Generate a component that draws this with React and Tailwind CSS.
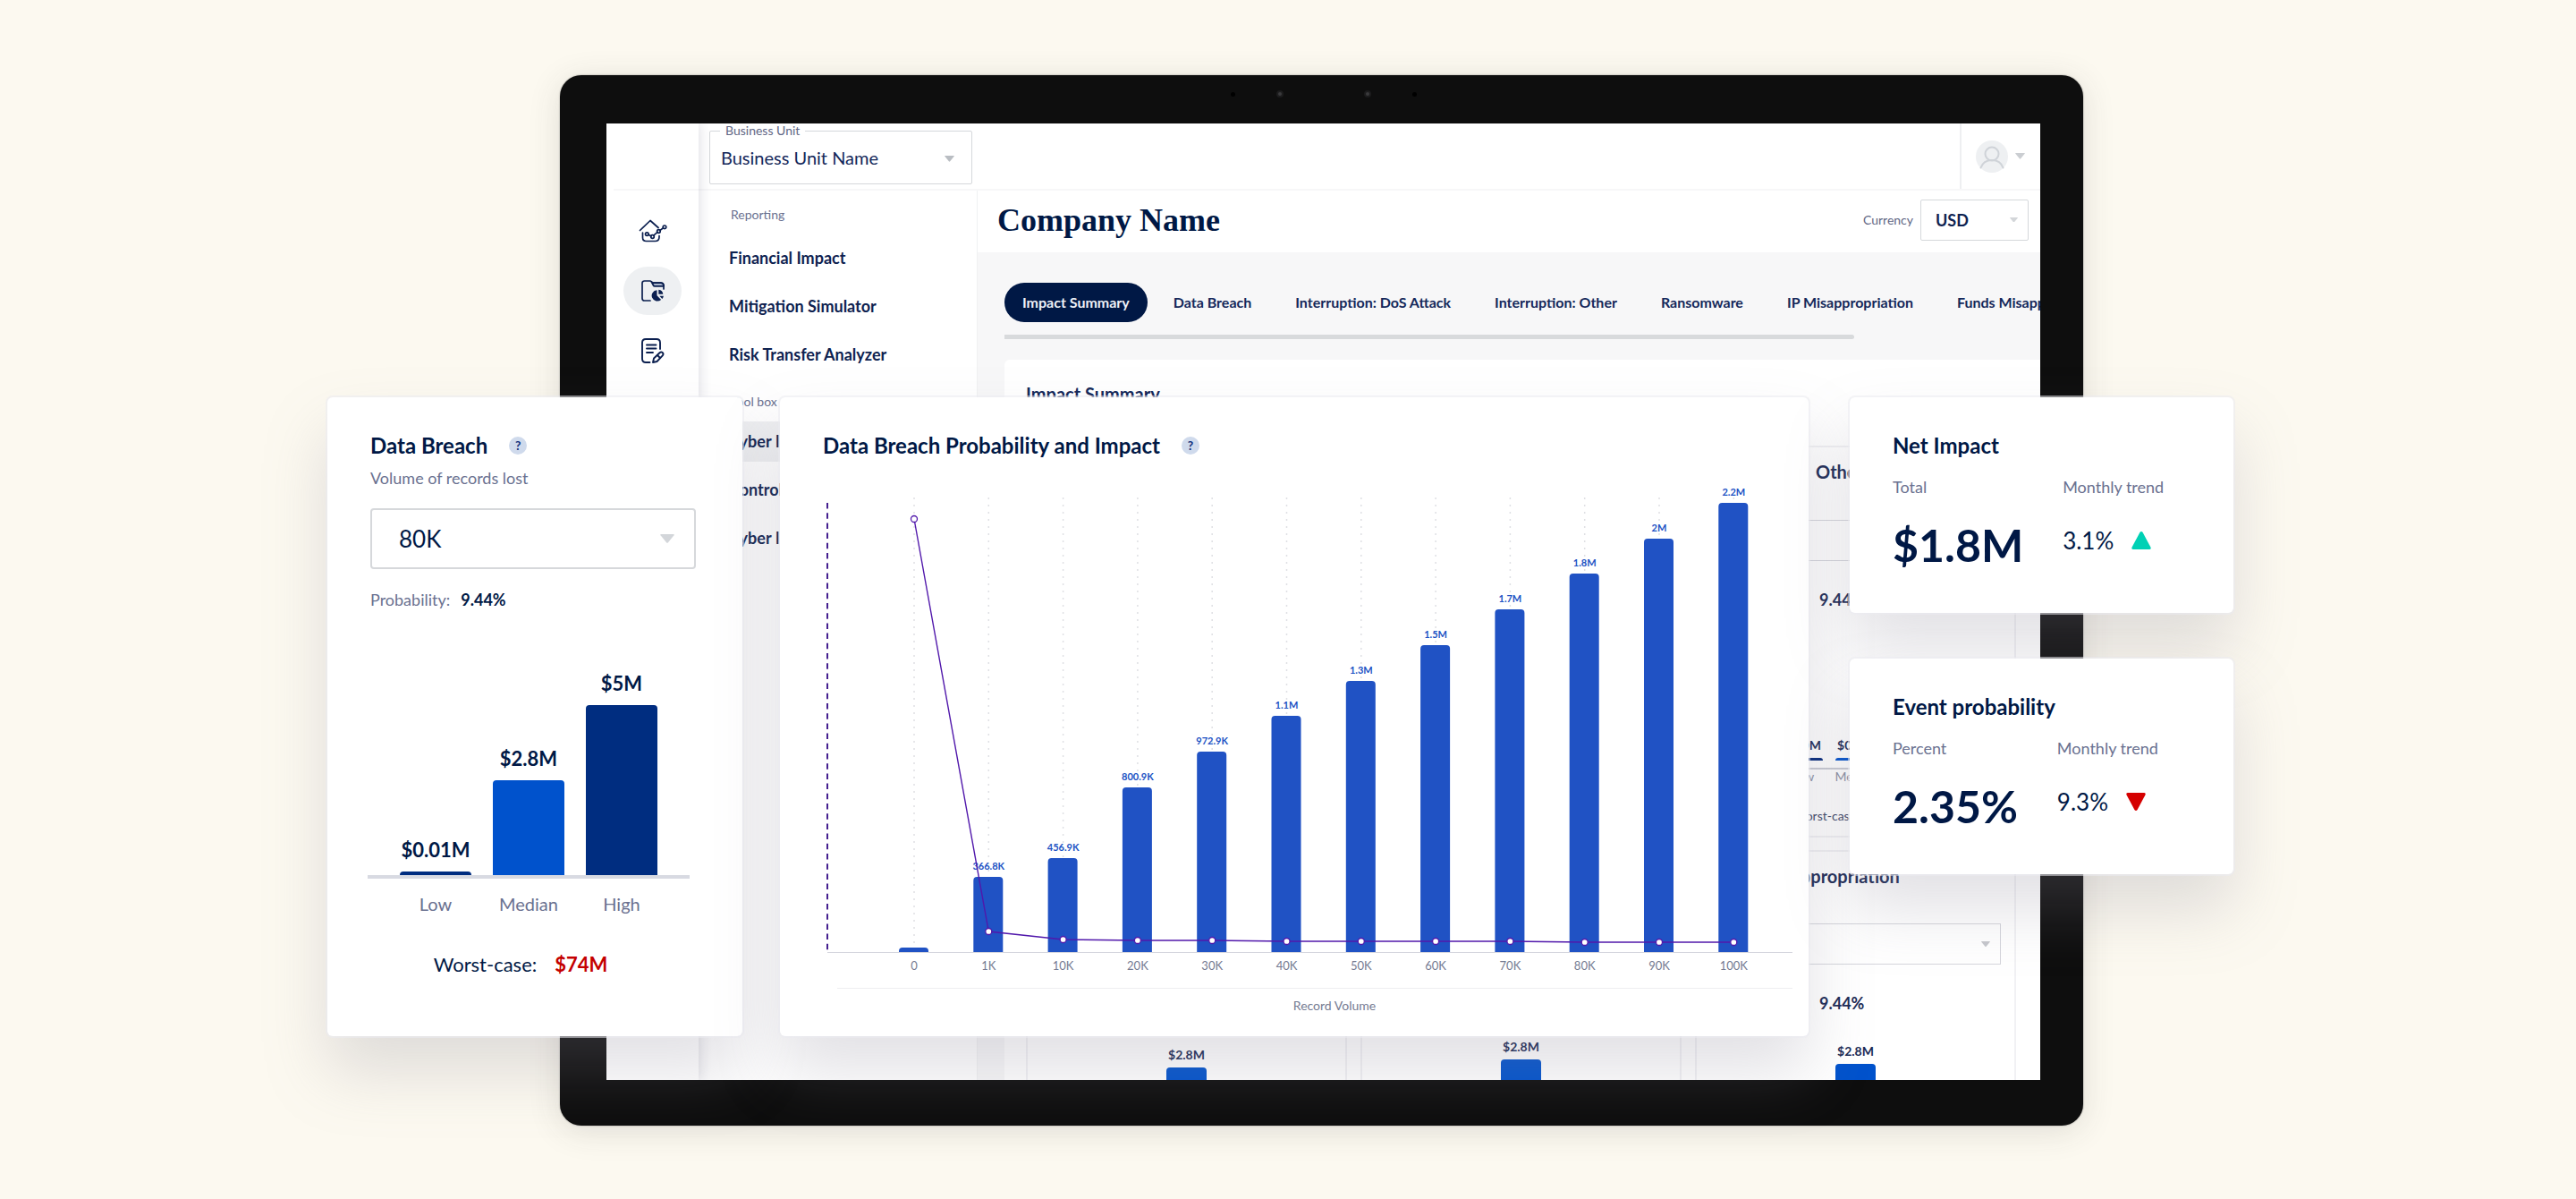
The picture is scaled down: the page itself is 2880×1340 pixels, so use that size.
import React from "react";

const SHADOW = "shadow-[0_0_0_2px_rgba(235,235,240,0.55),0_40px_70px_rgba(138,136,150,0.25)]";

const NAV_REPORTING = ["Financial Impact", "Mitigation Simulator", "Risk Transfer Analyzer"];
const NAV_TOOLBOX = ["Cyber Incidents", "Controls", "Cyber Insights"];
const TABS = [
  "Impact Summary",
  "Data Breach",
  "Interruption: DoS Attack",
  "Interruption: Other",
  "Ransomware",
  "IP Misappropriation",
  "Funds Misappropriation",
];

const SERIES = [
  { x: "0", label: "", top: 515, line: 36 },
  { x: "1K", label: "366.8K", top: 436, line: 497 },
  { x: "10K", label: "456.9K", top: 415, line: 506 },
  { x: "20K", label: "800.9K", top: 336, line: 507 },
  { x: "30K", label: "972.9K", top: 296, line: 507 },
  { x: "40K", label: "1.1M", top: 256, line: 508 },
  { x: "50K", label: "1.3M", top: 217, line: 508 },
  { x: "60K", label: "1.5M", top: 177, line: 508 },
  { x: "70K", label: "1.7M", top: 137, line: 508 },
  { x: "80K", label: "1.8M", top: 97, line: 509 },
  { x: "90K", label: "2M", top: 58, line: 509 },
  { x: "100K", label: "2.2M", top: 18, line: 509 },
];

function Caret({ className }) {
  return (
    <svg viewBox="0 0 16 10" className={className} aria-hidden="true">
      <path d="M1 0h14q1.4 0 .5 1.2L9 9.2q-1 1.2-2 0L.5 1.2Q-.4 0 1 0z" fill="currentColor" />
    </svg>
  );
}

function HomeIcon() {
  return (
    <svg viewBox="0 0 32 28" className="h-7 w-8" fill="none" stroke="#0b1f4f" strokeWidth="1.7" strokeLinecap="round" strokeLinejoin="round">
      <path d="M1.5 13.5 13 2.5l9 8" />
      <path d="M4.5 16v5.500q0 4 4 4h10q4.500 0 4.500-4.500v-1.500" />
      <path d="m11 18.300 3 1.600m2.800-.8 4.300-3.700m2.600-1.800 3.500-2.600" />
      <circle cx="9.300" cy="17.600" r="1.800" />
      <circle cx="15.500" cy="20.500" r="1.800" />
      <circle cx="22.400" cy="14.500" r="1.800" />
      <circle cx="29" cy="9.800" r="1.800" />
    </svg>
  );
}

function FolderIcon() {
  return (
    <svg viewBox="0 0 28 26" className="h-[26px] w-7" fill="none" stroke="#0b1f4f" strokeWidth="1.7" strokeLinecap="round" strokeLinejoin="round">
      <path d="m12.500 3 2 4q.4.8 1.400.8H26V6.500q-1-2.300-3-2.300h-9.500z" fill="#a9b6cc" />
      <path d="M11 24H4.500Q2 24 2 21.500v-17Q2 2 4.500 2h6q1.200 0 2 1l1 1.200h9.500q3 0 3 3V11" />
      <path d="M18.500 12.200a6.200 6.200 0 1 0 4.600 10.700l-4.600-4.600z" fill="#0b1f4f" stroke="none" />
      <path d="M20.300 11.800v5h5a5.600 5.600 0 0 0-5-5z" fill="#0b1f4f" stroke="none" />
      <path d="M21.300 18.800h4.600a6 6 0 0 1-1.500 3.200z" fill="#0b1f4f" stroke="none" />
    </svg>
  );
}

function ReportIcon() {
  return (
    <svg viewBox="0 0 28 30" className="h-[30px] w-7" fill="none" stroke="#0b1f4f" strokeWidth="1.9" strokeLinecap="round" strokeLinejoin="round">
      <path d="M10.500 28H6q-4 0-4-4V6q0-4 4-4h12q4 0 4 4v7" />
      <path d="M7 8.500h10.500M7 12.500h10.500M7 17h7" />
      <path d="m14 28 1-4.500 6.500-6.300q1.800-1.500 3.300 0 1.400 1.600 0 3.200L18.500 27z" />
      <path d="m19.500 20.500 2.500 2.500" />
    </svg>
  );
}

function Help() {
  return (
    <button
      type="button"
      aria-label="Help"
      className="flex size-5 items-center justify-center rounded-full bg-[#cfdaec] text-sm leading-5 font-bold text-[#14317c]"
    >
      ?
    </button>
  );
}

function Rail() {
  const items = [
    { name: "Home", icon: <HomeIcon /> },
    { name: "Reporting", icon: <FolderIcon />, active: true },
    { name: "Assessments", icon: <ReportIcon /> },
  ];
  return (
    <nav aria-label="Sections" className="z-10 flex w-[103px] shrink-0 flex-col bg-white shadow-[2px_0_12px_rgba(40,40,80,0.14)]">
      <div className="ml-2 h-[75px] shrink-0 border-b-2 border-[#f7f7f8]" />
      <div className="flex flex-col items-center gap-[13px] pt-[18px]">
        {items.map((item) => (
          <button
            key={item.name}
            type="button"
            aria-label={item.name}
            className={
              item.active
                ? "flex h-[54px] w-[65px] items-center justify-center rounded-[27px] bg-[#eef0f2]"
                : "flex h-[54px] w-[65px] items-center justify-center"
            }
          >
            {item.icon}
          </button>
        ))}
      </div>
    </nav>
  );
}

function TopBar() {
  return (
    <header className="flex h-[75px] shrink-0 items-stretch justify-between border-b-2 border-[#f7f7f8] pl-3">
      <div className="relative mt-2 h-[60px] w-[294px]">
        <label htmlFor="unit" className="absolute -top-2 left-3 bg-white px-[6px] text-sm leading-4 text-[#5f6684]">
          Business Unit
        </label>
        <select
          id="unit"
          defaultValue="unit"
          className="size-full appearance-none rounded-xs border border-[#d5d8db] pl-3 text-xl text-[#14285a]"
        >
          <option value="unit">Business Unit Name</option>
        </select>
        <Caret className="pointer-events-none absolute top-7 right-5 w-[11px] text-[#b9bdc2]" />
      </div>
      <button type="button" aria-label="Account" className="flex w-[90px] items-center gap-2 border-l-2 border-[#eeeff1] pl-4">
        <svg viewBox="0 0 36 36" className="size-9" fill="none" stroke="#cfd3d8" strokeWidth="2" strokeLinecap="round">
          <circle cx="18" cy="18" r="18" fill="#eef0f2" stroke="none" />
          <circle cx="18" cy="15" r="7.500" />
          <path d="M5.500 30.500q3-8.500 12.500-8.500t12.500 8.500" />
        </svg>
        <Caret className="w-[11px] text-[#cbced2]" />
      </button>
    </header>
  );
}

function NavGroup({ title, items, active, listClass }) {
  return (
    <>
      <p className="px-9 text-sm leading-5 text-[#6a7190]">{title}</p>
      <ul className={listClass}>
        {items.map((item) => (
          <li key={item}>
            <a
              href="#"
              className={
                item === active
                  ? "block bg-[#eff0f2] px-[34px] text-lg leading-[45px] font-bold text-[#0e2250]"
                  : "block px-[34px] text-lg leading-[45px] font-bold text-[#0e2250]"
              }
            >
              {item}
            </a>
          </li>
        ))}
      </ul>
    </>
  );
}

function MiniBar({ value, name, barClass }) {
  return (
    <div className="flex w-[45px] flex-col items-center">
      <span className="pb-1 text-sm leading-5 font-bold whitespace-nowrap text-[#1b2a55]">{value}</span>
      <div className={barClass} />
      {name && <span className="h-0 pt-2 text-sm leading-5 text-[#8b90a3]">{name}</span>}
    </div>
  );
}

function MiniCard({ title, name, children, worst }) {
  return (
    <section className="h-[438px] border-2 border-[#f1f1f4] px-[15px]">
      <h3 className="pt-[15px] text-xl leading-6 font-bold text-[#1b2a55]">{title}</h3>
      {title && (
        <>
          <div className="relative mt-[41px]">
            <select aria-label={name} className="h-[46px] w-full appearance-none border border-[#d5d6dc]" />
            <Caret className="pointer-events-none absolute top-5 right-3 w-[10px] text-[#c6c8cd]" />
          </div>
          <p className="mt-[31px] flex text-lg leading-6 text-[#6a7190]">
            <span className="w-[122px]">Probability:</span>
            <b className="text-[#1b2a55]">9.44%</b>
          </p>
        </>
      )}
      {children}
      {worst && (
        <p className="mt-10 flex justify-center gap-9 text-sm leading-6 text-[#3d4768]">
          Worst-case: <b>{worst}</b>
        </p>
      )}
    </section>
  );
}

function Dashboard() {
  return (
    <div className="flex min-h-0 flex-1 overflow-hidden bg-white">
      <Rail />
      <div className="flex min-w-0 flex-1 flex-col">
        <TopBar />
        <div className="flex min-h-0 flex-1">
          <aside className="w-[311px] shrink-0 pt-[17px]">
            <NavGroup title="Reporting" items={NAV_REPORTING} listClass="mt-4 mb-5 flex flex-col gap-[9px]" />
            <NavGroup title="Tool box" items={NAV_TOOLBOX} active="Cyber Incidents" listClass="mt-3 flex flex-col gap-[9px]" />
          </aside>
          <div className="flex min-w-0 flex-1 flex-col border-l border-[#f0f1f2]">
            <div className="flex h-[69px] shrink-0 items-center justify-between pr-[13px] pb-1 pl-[22px]">
              <h1 className="font-['Liberation_Serif',serif] text-4xl leading-none font-bold text-[#001845]">Company Name</h1>
              <div className="flex items-center gap-2">
                <label htmlFor="currency" className="text-sm text-[#5f6684]">
                  Currency
                </label>
                <div className="relative h-[46px] w-[121px]">
                  <select
                    id="currency"
                    defaultValue="USD"
                    className="size-full appearance-none rounded-xs border border-[#d5d8db] pl-4 text-lg font-bold text-[#0e2250]"
                  >
                    <option>USD</option>
                  </select>
                  <Caret className="pointer-events-none absolute top-5 right-3 w-[9px] text-[#d3d6d9]" />
                </div>
              </div>
            </div>
            <main className="flex min-h-0 flex-1 flex-col bg-[#f7f7f8] pl-[30px]">
              <div role="tablist" className="mt-[34px] flex shrink-0 gap-[9px] overflow-hidden">
                {TABS.map((tab, i) => (
                  <button
                    key={tab}
                    type="button"
                    role="tab"
                    aria-selected={i === 0}
                    className={
                      i === 0
                        ? "h-11 shrink-0 rounded-full bg-[#001845] px-5 text-base font-bold text-[#eef1f7]"
                        : "h-11 shrink-0 px-5 text-base font-bold text-[#14285a]"
                    }
                  >
                    {tab}
                  </button>
                ))}
              </div>
              <div className="mt-[14px] h-[5px] w-[82%] shrink-0 rounded-r-full bg-[#d8dadc]" />
              <div className="mt-[23px] flex min-h-0 flex-1 flex-col overflow-hidden rounded-tl-md bg-white pr-[27px] pl-6">
                <h2 className="mt-[22px] mb-[42px] text-xl leading-8 font-bold text-[#14285a]">Impact Summary</h2>
                <div className="grid shrink-0 grid-cols-3 gap-x-[15px] gap-y-[14px]">
                  <MiniCard />
                  <MiniCard />
                  <MiniCard
                    name="Interruption: Other"
                    title={
                      <>
                        <span className="inline-block w-[118px] text-lg leading-6">Interruption:</span>Other
                      </>
                    }
                    worst="$0M"
                  >
                    <div className="mt-[141px] flex items-end justify-center gap-[14px] border-b-2 border-[#c9cbd4]">
                      <MiniBar value="$0.0M" name="Low" barClass="h-[3px] w-full rounded-t-sm bg-[#00277a]" />
                      <MiniBar value="$0.0M" name="Median" barClass="h-[3px] w-full rounded-t-sm bg-[#0052cc]" />
                      <MiniBar value="$0.0M" name="High" barClass="h-[3px] w-full rounded-t-sm bg-[#00277a]" />
                    </div>
                  </MiniCard>
                  <MiniCard>
                    <div className="mt-[202px] flex justify-center">
                      <MiniBar value="$2.8M" barClass="h-24 w-full rounded-t-sm bg-[#0052cc]" />
                    </div>
                  </MiniCard>
                  <MiniCard>
                    <div className="mt-[193px] flex justify-center">
                      <MiniBar value="$2.8M" barClass="h-24 w-full rounded-t-sm bg-[#0052cc]" />
                    </div>
                  </MiniCard>
                  <MiniCard name="Funds Misappropriation" title="Funds Misappropriation">
                    <div className="mt-8 flex justify-center">
                      <MiniBar value="$2.8M" barClass="h-24 w-full rounded-t-sm bg-[#0052cc]" />
                    </div>
                  </MiniCard>
                </div>
              </div>
            </main>
          </div>
        </div>
      </div>
    </div>
  );
}

function Device() {
  return (
    <div className="col-start-2 row-start-1 flex min-h-0 flex-col rounded-[24px] bg-[#0e0e0e] pr-12 pb-[51px] pl-[52px] shadow-[0_0_2px_rgba(0,0,0,0.4),0_6px_36px_rgba(60,55,60,0.14)]">
      <div className="flex h-[54px] shrink-0 items-center justify-center gap-[46px] pb-3">
        <span className="size-[5px] rounded-full bg-black" />
        <span className="size-2 rounded-full border-2 border-[#1c1c1d] bg-[#3a3a3c]" />
        <span className="ml-11 size-2 rounded-full border-2 border-[#1c1c1d] bg-[#3a3a3c]" />
        <span className="size-[5px] rounded-full bg-black" />
      </div>
      <Dashboard />
    </div>
  );
}

const BREACH_BARS = [
  { name: "Low", value: "$0.01M", bar: "h-1 w-full rounded-t-sm bg-[#002d80]" },
  { name: "Median", value: "$2.8M", bar: "h-[106px] w-full rounded-t-sm bg-[#0052cc]" },
  { name: "High", value: "$5M", bar: "h-[190px] w-full rounded-t-sm bg-[#002d80]" },
];

function BreachCard() {
  return (
    <section className={`col-start-2 rounded-md bg-white pt-[38px] pr-[52px] pb-[66px] pl-12 ${SHADOW}`}>
      <div className="flex items-center gap-6">
        <h2 className="text-2xl leading-8 font-bold">Data Breach</h2>
        <Help />
      </div>
      <label htmlFor="volume" className="mt-2 block text-lg leading-6 text-[#6a7190]">
        Volume of records lost
      </label>
      <div className="relative mt-[22px]">
        <select
          id="volume"
          defaultValue="80K"
          className="h-[68px] w-full appearance-none rounded-sm border-2 border-[#d6d8db] pl-[30px] text-[26px]"
        >
          <option>80K</option>
        </select>
        <Caret className="pointer-events-none absolute top-[29px] right-6 w-4 text-[#d3d6da]" />
      </div>
      <p className="mt-[22px] flex gap-3 text-lg leading-6 text-[#6a7190]">
        Probability: <b className="text-[#001845]">9.44%</b>
      </p>
      <div className="mr-[7px] -ml-[3px] flex h-[300px] items-end justify-center gap-6 border-b-4 border-[#d8dae2]">
        {BREACH_BARS.map((b) => (
          <div key={b.name} className="flex w-20 flex-col items-center">
            <span className="mb-[10px] text-[22px] leading-7 font-bold whitespace-nowrap">{b.value}</span>
            <div className={b.bar} />
          </div>
        ))}
      </div>
      <div className="mt-[14px] mr-[7px] -ml-[3px] flex justify-center gap-6 text-xl leading-7 text-[#6a7190]">
        {BREACH_BARS.map((b) => (
          <span key={b.name} className="w-20 text-center">
            {b.name}
          </span>
        ))}
      </div>
      <p className="mt-10 flex justify-center gap-5 pr-7 text-[22px] leading-7">
        Worst-case: <b className="text-[#c40000]">$74M</b>
      </p>
    </section>
  );
}

function ImpactChart() {
  const px = (i) => 102 + i * 83.3;
  return (
    <svg viewBox="0 0 1084 548" className="mt-[30px] block w-full" role="img" aria-label="Data breach probability and impact by record volume">
      {SERIES.map((s, i) => (
        <line key={s.x} x1={px(i)} x2={px(i)} y1="12" y2="520" stroke="#dfe0e4" strokeWidth="1.500" strokeDasharray="2 6" />
      ))}
      <line x1="5" x2="5" y1="18" y2="520" stroke="#45208f" strokeWidth="2" strokeDasharray="6.500 4.700" />
      {SERIES.map((s, i) => (
        <g key={s.x}>
          <path d={`M${px(i) - 17} 520V${s.top + 4}q0-4 4-4h25q4 0 4 4V520z`} fill="#2052c4" />
          <text x={px(i)} y={s.top - 8} textAnchor="middle" className="fill-[#2052c4] text-[11px] font-bold">
            {s.label}
          </text>
          <text x={px(i)} y="540" textAnchor="middle" className="fill-[#757b92] text-[13px]">
            {s.x}
          </text>
        </g>
      ))}
      <line x1="5" x2="1084" y1="520.500" y2="520.500" stroke="#d4d6de" />
      <polyline points={SERIES.map((s, i) => `${px(i)},${s.line}`).join(" ")} fill="none" stroke="#5118ab" strokeWidth="1.400" />
      {SERIES.map((s, i) => (
        <circle key={s.x} cx={px(i)} cy={s.line} r="3.500" fill="#fff" stroke="#5118ab" strokeWidth="1.300" />
      ))}
    </svg>
  );
}

function ChartCard() {
  return (
    <section className={`col-start-4 rounded-md bg-white pt-[38px] pr-[18px] pb-6 pl-12 ${SHADOW}`}>
      <div className="flex items-center gap-6">
        <h2 className="text-2xl leading-8 font-bold">Data Breach Probability and Impact</h2>
        <Help />
      </div>
      <ImpactChart />
      <p className="mt-3 ml-4 border-t border-[#eeeef1] pt-[9px] pl-11 text-center text-sm leading-5 text-[#757b92]">Record Volume</p>
    </section>
  );
}

function StatCard({ title, label, value, trend, up }) {
  return (
    <section className={`rounded-md bg-white pt-[38px] pb-12 pl-12 ${SHADOW}`}>
      <h2 className="text-2xl leading-8 font-bold">{title}</h2>
      <div className="mt-[18px] flex gap-11">
        <div>
          <p className="text-lg leading-6 text-[#6a7190]">{label}</p>
          <p className="mt-[25px] text-[50px] leading-14 font-bold">{value}</p>
        </div>
        <div>
          <p className="text-lg leading-6 text-[#6a7190]">Monthly trend</p>
          <p className="mt-8 flex items-center gap-5 text-[26px] leading-8">
            {trend}
            {up ? (
              <svg viewBox="0 0 22 20" className="h-5 w-[22px]" role="img" aria-label="Up">
                <path d="M9.400 1q1.600-2 3.200 0l8.800 16.500q1 2.500-1.400 2.500H2Q-.4 20 .6 17.500z" fill="#00d1b5" />
              </svg>
            ) : (
              <svg viewBox="0 0 22 20" className="h-5 w-[22px]" role="img" aria-label="Down">
                <path d="M9.400 19q1.600 2 3.200 0l8.800-16.500Q22.400 0 20 0H2Q-.4 0 .6 2.500z" fill="#d50000" />
              </svg>
            )}
          </p>
        </div>
      </div>
    </section>
  );
}

export default function App() {
  return (
    <div className="grid h-screen grid-cols-[minmax(0,626fr)_minmax(0,1703fr)_minmax(0,551fr)] grid-rows-[minmax(0,1fr)] overflow-hidden bg-[#fcf9f0] pt-[84px] pb-[82px] font-['Lato','Liberation_Sans',sans-serif] text-[#001845]">
      <Device />
      <div className="z-20 col-span-3 col-start-1 row-start-1 mt-[360px] grid grid-cols-[minmax(0,366fr)_minmax(0,464fr)_minmax(0,42fr)_minmax(0,1150fr)_minmax(0,46fr)_minmax(0,429fr)_minmax(0,383fr)] self-start">
        <BreachCard />
        <ChartCard />
        <div className="col-start-6 flex flex-col gap-[51px] self-start">
          <StatCard title="Net Impact" label="Total" value="$1.8M" trend="3.1%" up />
          <StatCard title="Event probability" label="Percent" value="2.35%" trend="9.3%" />
        </div>
      </div>
    </div>
  );
}
